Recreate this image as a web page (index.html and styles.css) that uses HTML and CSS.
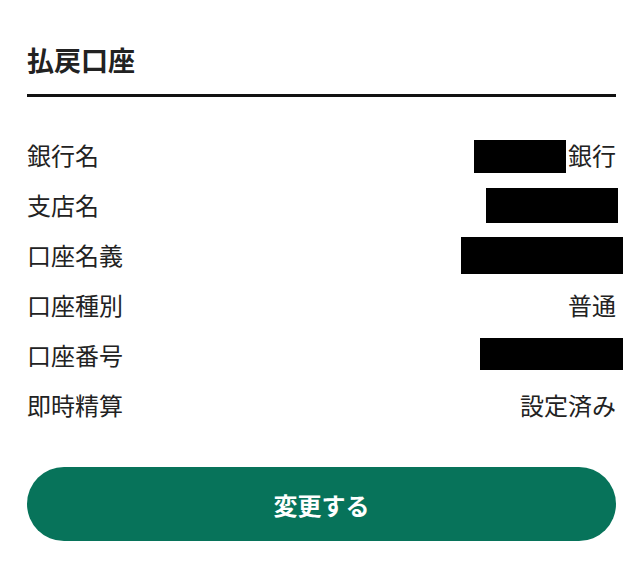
FILE: index.html
```html
<!DOCTYPE html>
<html lang="ja">
<head>
  <meta charset="UTF-8">
  <meta name="viewport" content="width=device-width, initial-scale=1.0">
  <title>払戻口座</title>
  <link rel="stylesheet" href="styles.css">
</head>
<body>
  <div class="container">
    <h2 class="title">払戻口座</h2>

    <!-- Account details -->
    <div class="rows">
      <div class="row">
        <span class="label">銀行名</span>
        <span class="value"><span class="redact redact-bank"></span>銀行</span>
      </div>
      <div class="row">
        <span class="label">支店名</span>
        <span class="value"><span class="redact redact-branch"></span></span>
      </div>
      <div class="row">
        <span class="label">口座名義</span>
        <span class="value"><span class="redact redact-holder"></span></span>
      </div>
      <div class="row">
        <span class="label">口座種別</span>
        <span class="value">普通</span>
      </div>
      <div class="row">
        <span class="label">口座番号</span>
        <span class="value"><span class="redact redact-number"></span></span>
      </div>
      <div class="row">
        <span class="label">即時精算</span>
        <span class="value">設定済み</span>
      </div>
    </div>

    <button class="change-btn" type="button">変更する</button>
  </div>
</body>
</html>
```

FILE: styles.css
```css
* {
  margin: 0;
  padding: 0;
  box-sizing: border-box;
}

body {
  font-family: "Noto Sans CJK JP", "Noto Sans", sans-serif;
  background-color: #fff;
  color: #222;
}

.container {
  margin: 0 24px 0 27px;
  padding-top: 42px;
}

.title {
  font-size: 27px;
  font-weight: bold;
  line-height: 36px;
  color: #222;
  padding-bottom: 16px;
  border-bottom: 3px solid #111;
}

.rows {
  margin-top: 33px;
}

.row {
  display: flex;
  justify-content: space-between;
  align-items: center;
  height: 50px;
  font-size: 24px;
  line-height: 34px;
}

.value {
  display: flex;
  align-items: center;
}

.redact {
  display: inline-block;
  background-color: #000;
}

.redact-bank {
  width: 92px;
  height: 33px;
  margin-right: 2px;
  margin-top: 2px;
}

.redact-branch {
  width: 132px;
  height: 35px;
  margin-right: -2px;
  margin-top: 1px;
}

.redact-holder {
  width: 162px;
  height: 37px;
  margin-right: -7px;
  margin-top: 1px;
}

.redact-number {
  width: 143px;
  height: 32px;
  margin-right: -7px;
  margin-top: -3px;
}

.change-btn {
  display: block;
  width: 100%;
  height: 74px;
  margin-top: 37px;
  border: none;
  border-radius: 37px;
  background-color: #07735a;
  color: #fff;
  font-family: inherit;
  font-size: 24px;
  font-weight: bold;
}
```
